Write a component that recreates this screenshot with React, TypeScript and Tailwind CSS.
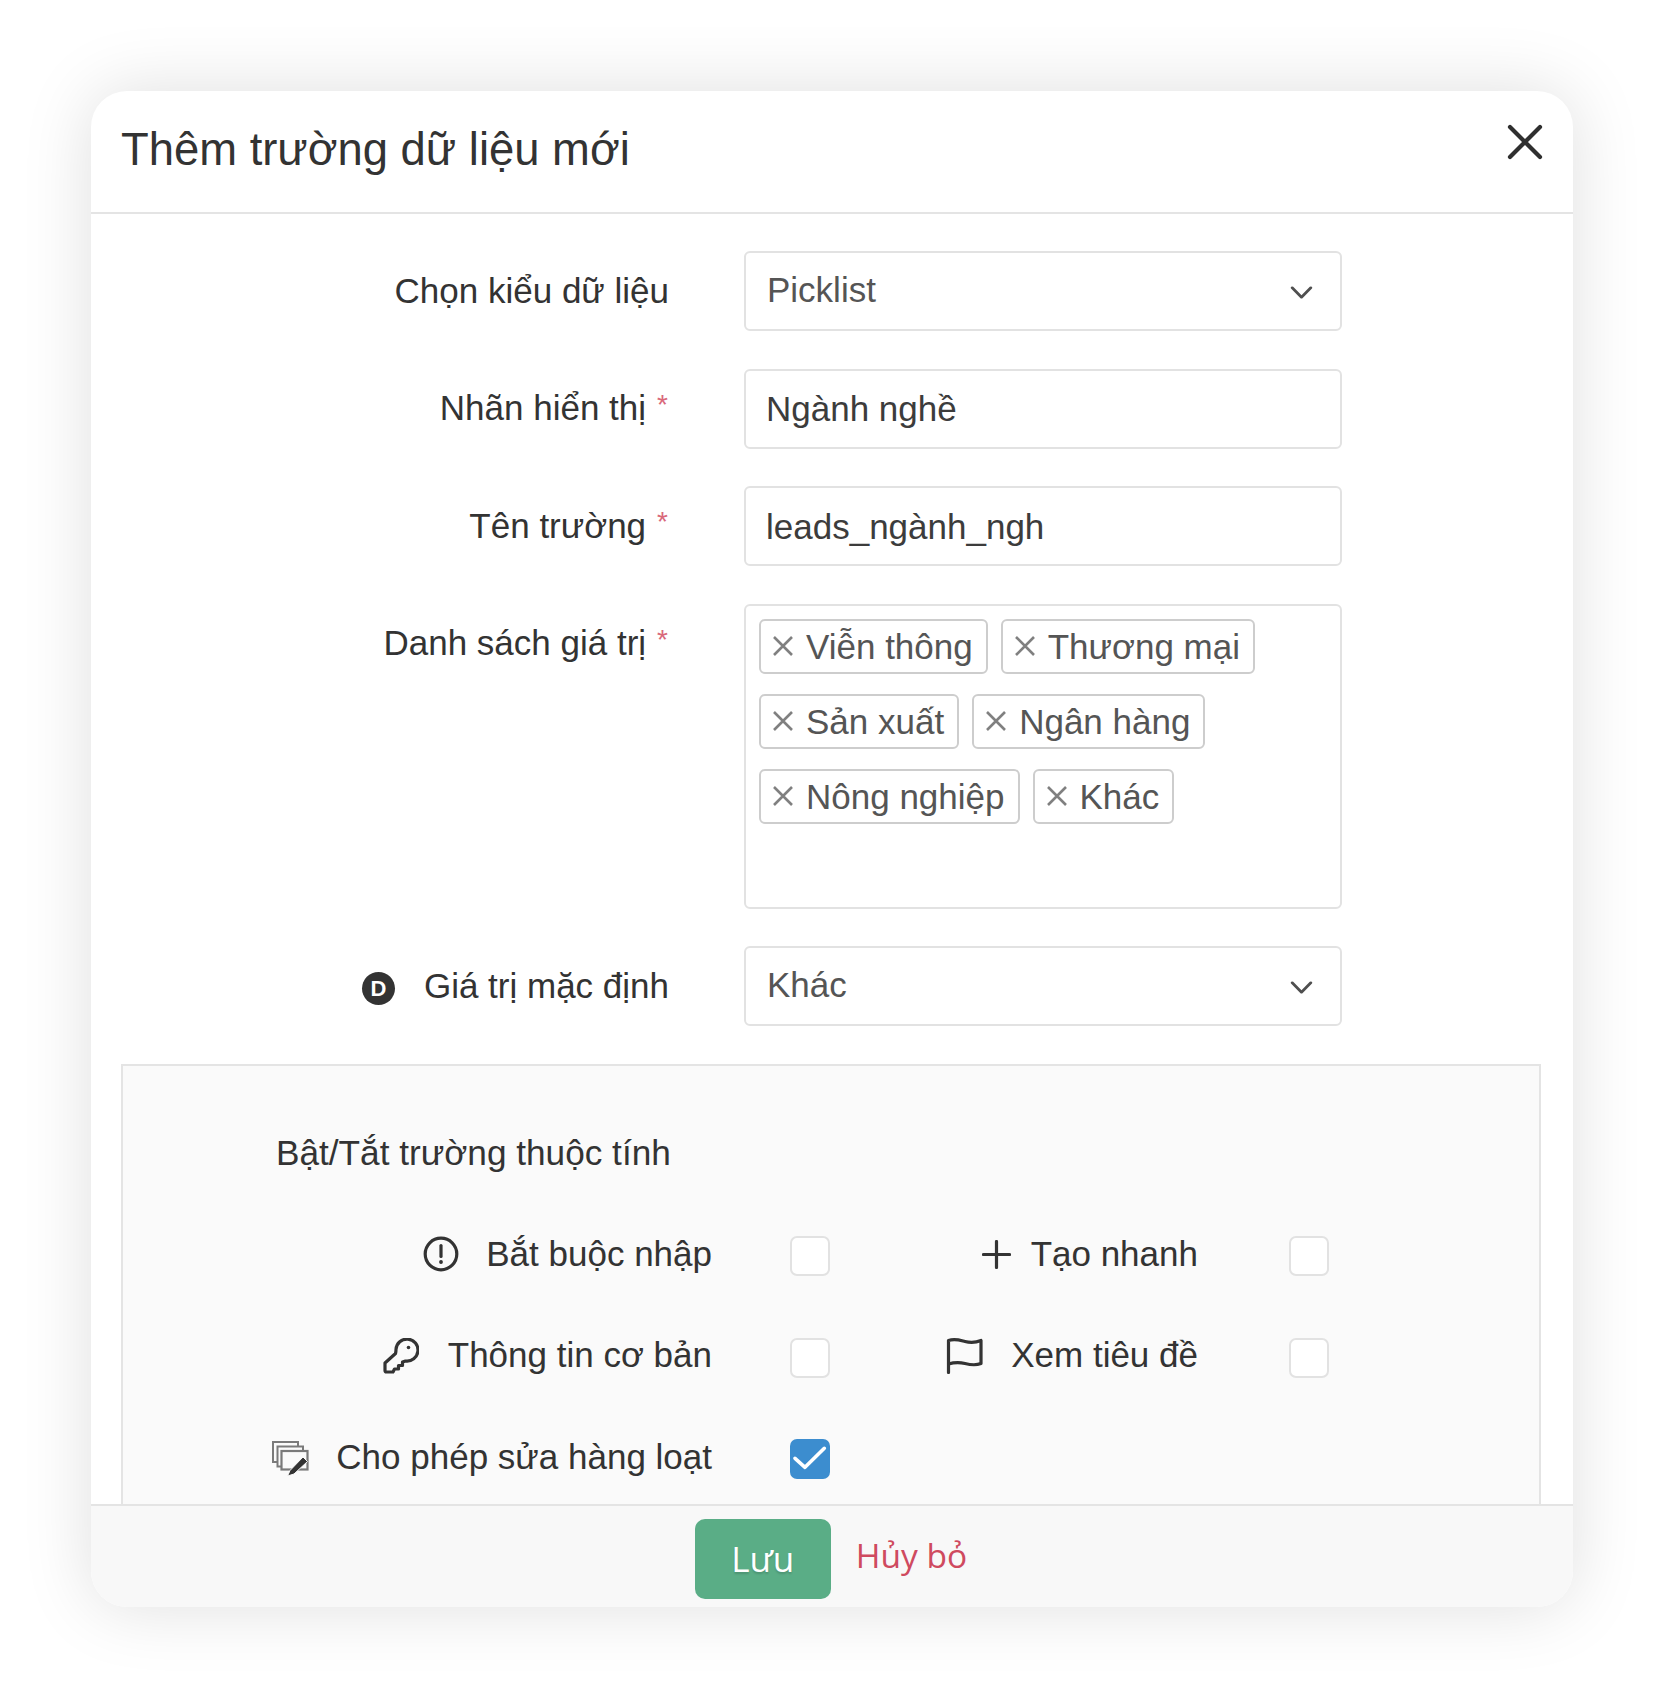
import React from "react";

const SANS = "font-['Liberation_Sans',Arial,sans-serif]";

function Star() {
  return <span className="ml-[11px] mr-[1px] text-[28px] leading-none text-[#d9687a] relative -top-[4px]">*</span>;
}

function Row({ label, children, icon, star }: { label: string; children: React.ReactNode; icon?: React.ReactNode; star?: boolean }) {
  return (
    <div className="flex items-start">
      <div className="w-[578px] h-[80px] flex items-center justify-end text-[35px] text-[#333] shrink-0">
        {icon}
        <span>{label}</span>
        {star && <Star />}
      </div>
      <div className="ml-[75px] w-[598px]">{children}</div>
    </div>
  );
}

function SelectBox({ value }: { value: string }) {
  return (
    <div className="h-[80px] border-2 border-[#e2e2e2] rounded-[6px] bg-white flex items-center justify-between pl-[21px] pr-[27px] text-[35px] text-[#555]">
      <span className="relative -top-[1px]">{value}</span>
      <svg viewBox="0 0 24 14" className="w-[23px] h-[13px] relative top-[1px]" fill="none" stroke="#4f4f4f" strokeWidth="3" strokeLinecap="round" strokeLinejoin="round">
        <path d="M2 2 L12 12 L22 2" />
      </svg>
    </div>
  );
}

function TextBox({ value }: { value: string }) {
  return (
    <div className="h-[80px] border-2 border-[#e2e2e2] rounded-[6px] bg-white flex items-center pl-[20px] text-[35px] text-[#3c3c3c]">
      <span className="relative top-[1px]">{value}</span>
    </div>
  );
}

function Tag({ text }: { text: string }) {
  return (
    <div className="h-[55px] border-2 border-[#cdcdcd] rounded-[6px] flex items-center pl-[10px] pr-[13px] text-[35px] text-[#555] bg-white">
      <svg viewBox="0 0 24 24" className="w-[24px] h-[24px] mr-[11px]" fill="none" stroke="#808080" strokeWidth="2.6">
        <path d="M3 3 L21 21 M21 3 L3 21" />
      </svg>
      <span className="whitespace-nowrap relative top-[1px]">{text}</span>
    </div>
  );
}

function Check({ on }: { on?: boolean }) {
  return on ? (
    <div className="w-[40px] h-[40px] rounded-[7px] bg-[#3c8dcf]">
      <svg viewBox="0 0 40 40" className="w-[40px] h-[40px]" fill="none" stroke="#fff" strokeWidth="3.6" strokeLinecap="round" strokeLinejoin="round">
        <path d="M5 19.3 L15 28.3 L34.3 9.3" />
      </svg>
    </div>
  ) : (
    <div className="w-[40px] h-[40px] rounded-[7px] border-2 border-[#e2e2e2] bg-white" />
  );
}

function Prop({ label, icon, gap }: { label: string; icon: React.ReactNode; gap: string }) {
  return (
    <div className="flex items-center h-[64px] justify-end">
      {icon}
      <span className={`${gap} text-[35px] text-[#333] whitespace-nowrap relative -top-[2px]`}>{label}</span>
    </div>
  );
}

function AlertIcon() {
  return (
    <svg viewBox="0 0 36 36" className="w-[36px] h-[36px] relative -top-[2px]" fill="none" stroke="#333" strokeWidth="3.2" strokeLinecap="round">
      <circle cx="18" cy="18" r="15.8" />
      <path d="M18 9.5 V20.5" />
      <circle cx="18" cy="26" r="1.2" fill="#333" strokeWidth="1.4" />
    </svg>
  );
}

function PlusIcon() {
  return (
    <svg viewBox="0 0 29 29" className="w-[29px] h-[29px] relative -top-[2px]" fill="none" stroke="#333" strokeWidth="3.2" strokeLinecap="round">
      <path d="M14.5 1.5 V27.5 M1.5 14.5 H27.5" />
    </svg>
  );
}

function KeyIcon() {
  return (
    <svg viewBox="0 0 36 36" className="w-[36px] h-[36px] relative -top-[2px]" fill="none" stroke="#333" strokeWidth="3.2" strokeLinejoin="round">
      <path d="M13 11.5 A11 11 0 1 1 22.5 23 L19.5 24 V27.5 H15.5 V31 H11.5 L10 34 H3.5 Q2 34 2 32.5 V25 L12.5 15.5 Q13 13.5 13 11.5 Z" />
      <circle cx="25.5" cy="9.5" r="1.8" fill="#333" stroke="none" />
    </svg>
  );
}

function FlagIcon() {
  return (
    <svg viewBox="0 0 37 36" className="w-[37px] h-[36px] relative -top-[2px]" fill="none" stroke="#333" strokeWidth="3.2" strokeLinecap="round" strokeLinejoin="round">
      <path d="M2.5 34.5 V2.5 C9 0.5 13 2 19 3.5 C25 5 30 4.5 35 2.5 V25.5 C30 27.5 25 27 19 25.5 C13 24 9 24 2.5 26" />
    </svg>
  );
}

function StackIcon() {
  return (
    <svg viewBox="0 0 37 36" className="w-[37px] h-[36px]" fill="#fafafa" stroke="#7a7a7a" strokeWidth="2">
      <rect x="1" y="1" width="25" height="20" />
      <rect x="5.5" y="5.5" width="25.5" height="20" />
      <rect x="9.5" y="10" width="26" height="18.5" strokeWidth="2.2" />
      <path d="M15.5 35 L18 29.5 L31 16 L35.5 20.5 L22 33 Z" fill="#333" stroke="#fafafa" strokeWidth="1" />
    </svg>
  );
}

export default function App() {
  return (
    <div className={`w-[1664px] h-[1698px] bg-white pt-[91px] pl-[91px] ${SANS}`}>
      <div className="w-[1482px] h-[1516px] bg-white rounded-[36px] shadow-[0_0_70px_rgba(0,0,0,0.13)] overflow-hidden flex flex-col">
        <div className="h-[123px] shrink-0 border-b-2 border-[#e4e4e4] flex justify-between pl-[30px] pr-[30px]">
          <div className="text-[45.4px] text-[#333] pt-[29px] leading-[60px]">Thêm trường dữ liệu mới</div>
          <svg viewBox="0 0 36 36" className="w-[36px] h-[36px] mt-[33px]" fill="none" stroke="#2f2f2f" strokeWidth="4.2" strokeLinecap="round">
            <path d="M3 3 L33 33 M33 3 L3 33" />
          </svg>
        </div>

        <div className="flex-1 overflow-hidden pl-[30px] pr-[32px] pt-[37px] flex flex-col">
          <div className="flex flex-col gap-[37.5px] -ml-[30px]">
            <Row label="Chọn kiểu dữ liệu"><SelectBox value="Picklist" /></Row>
            <Row label="Nhãn hiển thị" star><TextBox value="Ngành nghề" /></Row>
            <Row label="Tên trường" star><TextBox value="leads_ngành_ngh" /></Row>
            <Row label="Danh sách giá trị" star>
              <div className="h-[305px] border-2 border-[#e2e2e2] rounded-[6px] bg-white pl-[13px] pt-[13px] flex flex-col gap-[20px]">
                <div className="flex gap-[13px]">
                  <Tag text="Viễn thông" />
                  <Tag text="Thương mại" />
                </div>
                <div className="flex gap-[13px]">
                  <Tag text="Sản xuất" />
                  <Tag text="Ngân hàng" />
                </div>
                <div className="flex gap-[13px]">
                  <Tag text="Nông nghiệp" />
                  <Tag text="Khác" />
                </div>
              </div>
            </Row>
            <Row
              label="Giá trị mặc định"
              icon={
                <span className="w-[33px] h-[33px] rounded-full bg-[#333] text-white text-[22px] font-bold flex items-center justify-center mr-[29px] relative top-[2px]">D</span>
              }
            >
              <SelectBox value="Khác" />
            </Row>
          </div>

          <div className="mt-[38px] border-2 border-[#e4e4e4] bg-[#fafafa] flex-1 min-h-[500px]">
            <div className="pt-[66px] pl-[153px] text-[35.2px] text-[#333] leading-[42px]">Bật/Tắt trường thuộc tính</div>
            <div className="mt-[50px] grid grid-cols-[589px_117px_369px_131px] grid-rows-[64px_64px_64px] gap-y-[37.5px] items-center">
              <Prop label="Bắt buộc nhập" gap="ml-[27px]" icon={<AlertIcon />} />
              <div className="ml-[78px]"><Check /></div>
              <Prop label="Tạo nhanh" gap="ml-[20px]" icon={<PlusIcon />} />
              <div className="ml-[91px]"><Check /></div>

              <Prop label="Thông tin cơ bản" gap="ml-[29px]" icon={<KeyIcon />} />
              <div className="ml-[78px]"><Check /></div>
              <Prop label="Xem tiêu đề" gap="ml-[28px]" icon={<FlagIcon />} />
              <div className="ml-[91px]"><Check /></div>

              <Prop label="Cho phép sửa hàng loạt" gap="ml-[27px]" icon={<StackIcon />} />
              <div className="ml-[78px]"><Check on /></div>
            </div>
          </div>
        </div>

        <div className="h-[103px] shrink-0 border-t-2 border-[#e4e4e4] bg-[#f8f8f8] flex items-start justify-center pt-[13px] pr-[2px]">
          <button className="w-[136px] h-[80px] rounded-[10px] bg-[#5aad86] text-white text-[35px] font-['Open_Sans',sans-serif] [text-shadow:0_2px_2px_rgba(0,0,0,0.15)]">Lưu</button>
          <span className="ml-[25px] mt-[11px] text-[33.5px] text-[#cf4a5f] font-['Open_Sans',sans-serif]">Hủy bỏ</span>
        </div>
      </div>
    </div>
  );
}
